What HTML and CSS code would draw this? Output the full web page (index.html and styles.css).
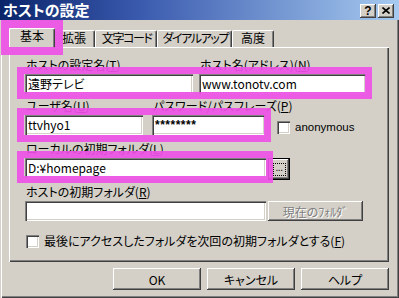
FILE: index.html
```html
<!DOCTYPE html>
<html lang="ja">
<head>
<meta charset="utf-8">
<title>ホストの設定</title>
<link rel="stylesheet" href="styles.css">
</head>
<body>
<div class="window">
  <div class="titlebar">
    <span class="title">ホストの設定</span>
    <div class="caption-buttons">
      <span class="cbtn help">?</span>
      <span class="cbtn close"><svg width="8" height="7" viewBox="0 0 8 7"><path d="M0.5 0.5 L7.5 6.5 M7.5 0.5 L0.5 6.5" stroke="#000" stroke-width="1.6" fill="none"/></svg></span>
    </div>
  </div>

  <div class="tabs">
    <div class="tab active t-basic"><span class="tab-text">基本</span></div>
    <div class="tab t-ext"><span class="tab-text">拡張</span></div>
    <div class="tab t-code"><span class="tab-text narrow">文字コード</span></div>
    <div class="tab t-dial"><span class="tab-text narrow">ダイアルアップ</span></div>
    <div class="tab t-adv"><span class="tab-text">高度</span></div>
  </div>

  <div class="panel">
    <div class="row row1">
      <div class="field w-host">
        <span class="label">ホストの設定名(<u>T</u>)</span>
        <div class="edit">遠野テレビ</div>
      </div>
      <div class="field w-addr">
        <span class="label">ホスト名(アドレス)(<u>N</u>)</span>
        <div class="edit">www.tonotv.com</div>
      </div>
    </div>

    <div class="row row2">
      <div class="field w-user">
        <span class="label">ユーザ名(<u>U</u>)</span>
        <div class="edit">ttvhyo1</div>
      </div>
      <div class="field w-pass">
        <span class="label">パスワード/パスフレーズ(<u>P</u>)</span>
        <div class="edit pass">********</div>
      </div>
      <div class="checkline anon">
        <span class="check"></span>
        <span class="check-label">anonymous</span>
      </div>
    </div>

    <div class="row row3">
      <div class="field w-local">
        <span class="label">ローカルの初期フォルダ(<u>L</u>)</span>
        <div class="edit-line">
          <div class="edit grow">D:¥homepage</div>
          <div class="btn browse"><span class="focus">...</span></div>
        </div>
      </div>
    </div>

    <div class="row row4">
      <div class="field w-remote">
        <span class="label">ホストの初期フォルダ(<u>R</u>)</span>
        <div class="edit-line">
          <div class="edit grow"></div>
          <div class="btn current disabled">現在のﾌｫﾙﾀﾞ</div>
        </div>
      </div>
    </div>

    <div class="checkline last">
      <span class="check"></span>
      <span class="check-label jp">最後にアクセスしたフォルダを次回の初期フォルダとする(<u>F</u>)</span>
    </div>
  </div>

  <div class="actions">
    <div class="btn action">OK</div>
    <div class="btn action">キャンセル</div>
    <div class="btn action">ヘルプ</div>
  </div>

  <div class="hl hl-tab"></div>
  <div class="hl hl-1"></div>
  <div class="hl hl-2"></div>
  <div class="hl hl-3"></div>
</div>
</body>
</html>
```

FILE: styles.css
```css
html, body {
  margin: 0;
  padding: 0;
  background: #d4d0c8;
}

body {
  font-family: "Liberation Sans", "Noto Sans CJK JP", sans-serif;
  font-size: 12px;
  color: #000;
  font-feature-settings: "palt";
}

.window {
  position: relative;
  width: 399px;
  height: 298px;
  box-sizing: border-box;
  background: #d4d0c8;
  box-shadow: inset 1px 1px #d4d0c8, inset 2px 2px #ffffff,
              inset -1px -1px #404040, inset -2px -2px #808080;
  display: flex;
  flex-direction: column;
  overflow: hidden;
}

/* Title bar */
.titlebar {
  height: 20px;
  flex: none;
  background: linear-gradient(to right, #0a246a 0%, #3a5aae 35%, #a6caf0 100%);
  display: flex;
  justify-content: space-between;
  align-items: flex-start;
}

.title {
  color: #fff;
  font-family: "Noto Sans CJK JP", sans-serif;
  font-weight: bold;
  font-size: 15px;
  line-height: 18px;
  padding: 1px 0 0 3px;
}

.caption-buttons {
  display: flex;
  gap: 2px;
  padding: 4px 5px 0 0;
}

.cbtn {
  width: 16px;
  height: 14px;
  box-sizing: border-box;
  background: #d4d0c8;
  box-shadow: inset -1px -1px #404040, inset 1px 1px #ffffff, inset -2px -2px #808080;
  display: flex;
  align-items: center;
  justify-content: center;
  font-family: "Liberation Sans", sans-serif;
  font-weight: bold;
  font-size: 12px;
  line-height: 12px;
  padding-bottom: 1px;
}

.cbtn svg { display: block; }

/* Tabs */
.tabs {
  flex: none;
  height: 19px;
  margin-top: 8px;
  padding-left: 11px;
  display: flex;
  align-items: flex-end;
  position: relative;
  z-index: 2;
}

.tab {
  height: 17px;
  box-sizing: border-box;
  padding: 0;
  line-height: 14px;
  border-top: 1px solid #fff;
  border-left: 1px solid #fff;
  border-right: 1px solid #404040;
  box-shadow: inset -1px 0 #808080;
  border-top-left-radius: 2px;
  border-top-right-radius: 2px;
  background: #d4d0c8;
  white-space: nowrap;
  font-family: "Noto Sans CJK JP", sans-serif;
  display: flex;
  justify-content: center;
  flex: none;
}

.t-basic { width: 42px; }
.t-ext { width: 42px; }
.t-code { width: 62px; }
.t-dial { width: 75px; }
.t-adv { width: 42px; }

.tab-text {
  position: relative;
  z-index: 6;
}

.tab-text.narrow {
  letter-spacing: -1.4px;
  margin-right: -1.4px;
}

.tab.active {
  width: 46px;
  height: 20px;
  margin: 0 -2px -1px -2px;
  position: relative;
  z-index: 3;
}

/* Panel */
.panel {
  flex: none;
  width: 380px;
  height: 215px;
  margin-left: 9px;
  box-sizing: border-box;
  box-shadow: inset 1px 1px #ffffff, inset -1px -1px #404040, inset -2px -2px #808080;
  padding: 11px 0 0 16px;
  display: flex;
  flex-direction: column;
  position: relative;
  z-index: 1;
}

.row {
  display: flex;
  align-items: flex-end;
}

.row2 { margin-top: 5px; }
.row3 { margin-top: 7px; }
.row4 { margin-top: 5px; }

.field {
  display: flex;
  flex-direction: column;
}

.label {
  position: relative;
  z-index: 6;
  line-height: 14px;
  height: 14px;
  padding-left: 1px;
  margin-bottom: 2px;
  white-space: nowrap;
  font-family: "Noto Sans CJK JP", sans-serif;
}

.label u, .check-label u { text-underline-offset: 1px; }

.w-host { width: 168px; }
.w-addr { width: 167px; margin-left: 6px; }
.w-user { width: 118px; }
.w-pass { width: 113px; margin-left: 9px; }
.w-local { width: 264px; }
.w-remote { width: 338px; }

.edit {
  height: 20px;
  box-sizing: border-box;
  background: #fff;
  box-shadow: inset 1px 1px #808080, inset 2px 2px #404040,
              inset -1px -1px #ffffff, inset -2px -2px #d4d0c8;
  padding: 0 3px;
  line-height: 20px;
  white-space: nowrap;
  overflow: hidden;
  font-family: "Noto Sans CJK JP", sans-serif;
}

.edit.pass {
  font-family: "Liberation Sans", sans-serif;
  font-weight: bold;
  font-size: 12px;
  letter-spacing: 0.5px;
}

.edit-line {
  display: flex;
  align-items: flex-start;
  gap: 2px;
}

.edit.grow { width: 241px; flex: none; }

/* Checkboxes */
.checkline {
  display: flex;
  align-items: center;
}

.check {
  width: 13px;
  height: 13px;
  flex: none;
  box-sizing: border-box;
  background: #fff;
  box-shadow: inset 1px 1px #808080, inset 2px 2px #404040,
              inset -1px -1px #ffffff, inset -2px -2px #d4d0c8;
}

.check-label {
  margin-left: 5px;
  line-height: 14px;
  white-space: nowrap;
}

.check-label.jp {
  font-family: "Noto Sans CJK JP", sans-serif;
}

.anon {
  margin-left: 12px;
  margin-bottom: 1px;
}

.anon .check-label {
  margin-left: 5px;
  font-size: 11.5px;
}

.last {
  margin-top: 13px;
  margin-left: 1px;
}

/* Buttons */
.btn {
  box-sizing: border-box;
  background: #d4d0c8;
  box-shadow: inset -1px -1px #404040, inset 1px 1px #ffffff,
              inset -2px -2px #808080, inset 2px 2px #d4d0c8;
  display: flex;
  align-items: center;
  justify-content: center;
  white-space: nowrap;
  font-family: "Noto Sans CJK JP", sans-serif;
}

.browse {
  width: 22px;
  height: 22px;
  flex: none;
  border: 1px solid #000;
  box-shadow: inset -1px -1px #404040, inset 1px 1px #ffffff, inset -2px -2px #808080;
}

.browse .focus {
  width: 13px;
  height: 13px;
  box-sizing: border-box;
  border: 1px dotted #000;
  font-family: "Liberation Sans", sans-serif;
  font-size: 10px;
  line-height: 14px;
  display: flex;
  justify-content: center;
  align-items: flex-end;
  letter-spacing: -0.5px;
}

.current {
  width: 95px;
  height: 20px;
  flex: none;
}

.disabled {
  color: #808080;
  text-shadow: 1px 1px #ffffff;
}

.actions {
  flex: none;
  display: flex;
  justify-content: flex-end;
  gap: 6px;
  margin-top: 6px;
  padding-right: 10px;
}

.action {
  width: 88px;
  height: 22px;
}

/* Magenta highlight rings */
.hl {
  position: absolute;
  box-sizing: border-box;
  border: 7px solid rgba(238, 80, 230, 0.92);
  z-index: 4;
  pointer-events: none;
}

.hl-tab { left: 1px; top: 20px; width: 62px; height: 35px; border-width: 8px; }
.hl-1 { left: 17px; top: 67px; width: 355px; height: 32px; }
.hl-2 { left: 17px; top: 108px; width: 254px; height: 34px; }
.hl-3 { left: 17px; top: 151px; width: 256px; height: 32px; }
```
